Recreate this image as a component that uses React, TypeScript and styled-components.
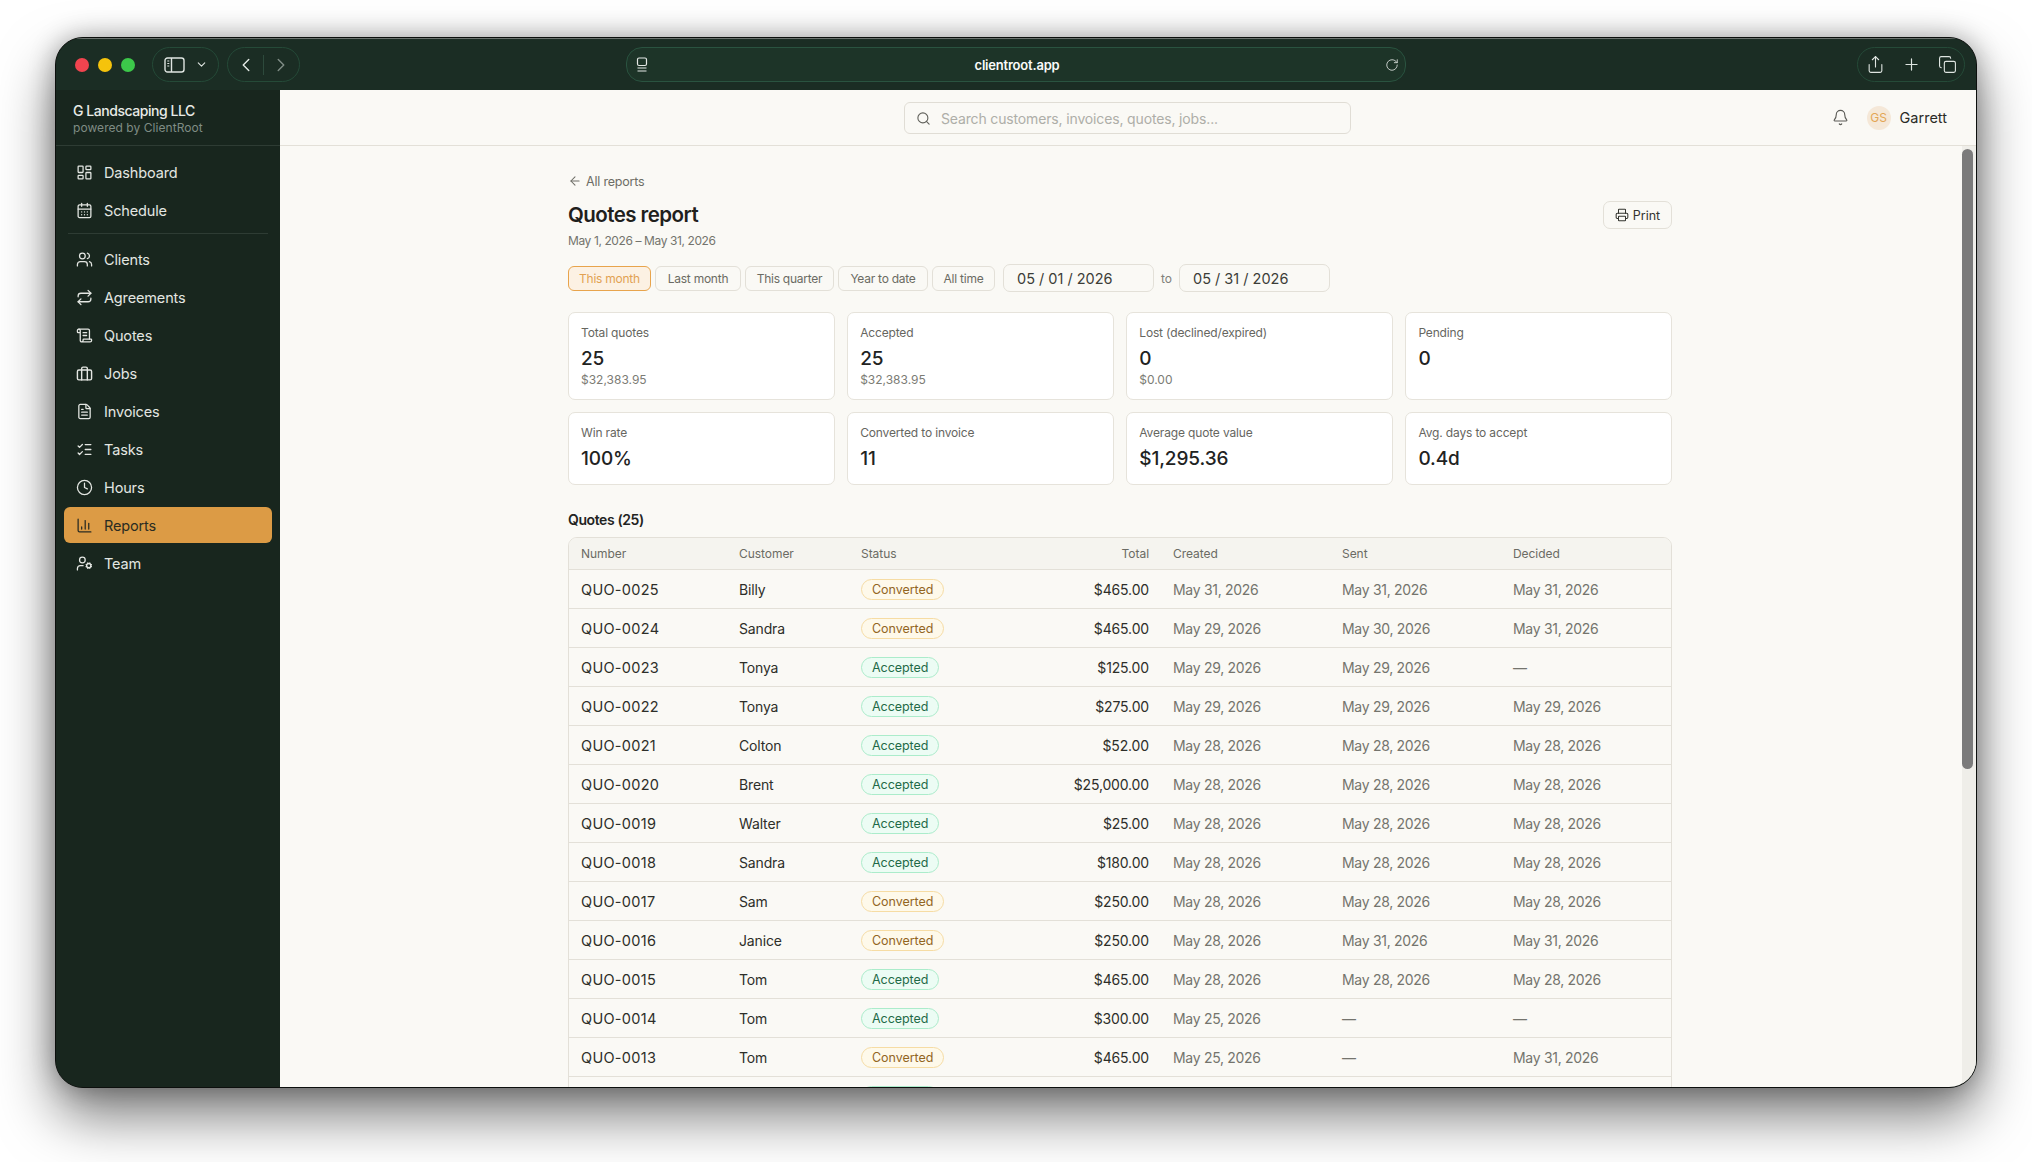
import styled, { createGlobalStyle } from "styled-components";
import {
  ArrowLeft,
  Bell,
  CalendarDays,
  ChartColumn,
  ChevronDown,
  ChevronLeft,
  ChevronRight,
  Clock,
  Copy,
  FileText,
  LayoutDashboard,
  ListChecks,
  Plus,
  Printer,
  Repeat,
  RotateCw,
  ScrollText,
  Search,
  Share,
  UserCog,
  Users,
} from "lucide-react";

const GlobalStyle = createGlobalStyle`
  html, body {
    margin: 0;
    padding: 0;
    background: #fff;
    overflow: hidden;
  }
  * { box-sizing: border-box; }
  body {
    font-family: Inter, "Open Sans", "Liberation Sans", sans-serif;
    color: #23241f;
  }
`;

const Stage = styled.div`
  width: 2032px;
  height: 1162px;
  padding: 37px 55px 74px;
`;

const Window = styled.div`
  width: 1922px;
  height: 1051px;
  display: flex;
  flex-direction: column;
  border: 1px solid #0c0f0d;
  border-radius: 28px;
  overflow: hidden;
  background: #18261e;
  box-shadow: 0 28px 56px rgba(0, 0, 0, 0.52), 0 0 26px rgba(0, 0, 0, 0.3);
`;

const Toolbar = styled.div`
  height: 52px;
  flex: none;
  display: flex;
  align-items: center;
  padding: 0 11px 0 19px;
  background: #1b2d24;
  border-top: 1px solid #6c736f;
`;

const Light = styled.span<{ $color: string }>`
  width: 14px;
  height: 14px;
  border-radius: 50%;
  background: ${(p) => p.$color};
  margin-right: 9px;
`;

const Pill = styled.div<{ $width: number; $gap?: number }>`
  width: ${(p) => p.$width}px;
  height: 35px;
  flex: none;
  display: flex;
  align-items: center;
  justify-content: center;
  gap: ${(p) => p.$gap ?? 17}px;
  border: 1px solid #254a38;
  border-radius: 18px;
  color: #dfe5e1;
  svg { flex: none; }
`;

const Lead = styled(Pill)`
  margin: 0 8px 0 8px;
`;

const Rule = styled.span`
  width: 1px;
  height: 20px;
  background: #2d4a3c;
`;

const Address = styled.div`
  width: 780px;
  height: 35px;
  flex: none;
  margin-left: 326px;
  display: flex;
  align-items: center;
  justify-content: space-between;
  padding: 0 6px 0 8px;
  background: #1d3428;
  border: 1px solid #2a5340;
  border-radius: 16px;
  color: #e4e8e5;
`;

const Url = styled.span`
  font-size: 13px;
  font-weight: 600;
  letter-spacing: -0.2px;
  color: #fafbfa;
`;

const TrailPill = styled(Pill)`
  margin-left: auto;
`;

const Body = styled.div`
  flex: 1;
  min-height: 0;
  display: flex;
`;

const Sidebar = styled.aside`
  width: 224px;
  flex: none;
  background: #18261e;
  color: #e3e6e2;
`;

const Brand = styled.div`
  height: 56px;
  padding: 12px 17px 0;
  border-bottom: 1px solid #2e3c34;
`;

const BrandName = styled.div`
  font-size: 14px;
  font-weight: 500;
  line-height: 18px;
  letter-spacing: -0.45px;
  color: #e8ebe7;
`;

const BrandSub = styled.div`
  font-size: 12px;
  line-height: 16px;
  letter-spacing: 0.05px;
  color: #7f8c84;
`;

const Nav = styled.nav`
  padding: 8px 8px 0 8px;
  display: flex;
  flex-direction: column;
  gap: 2px;
`;

const NavItem = styled.div<{ $active?: boolean }>`
  height: 36px;
  display: flex;
  align-items: center;
  gap: 11px;
  padding-left: 12px;
  border-radius: 6px;
  font-size: 14.5px;
  letter-spacing: -0.15px;
  background: ${(p) => (p.$active ? "#dc9b45" : "transparent")};
  color: ${(p) => (p.$active ? "#2a2c22" : "#e3e6e2")};
  svg { flex: none; }
`;

const NavRule = styled.div`
  height: 1px;
  margin: 3px 4px 5px;
  background: #2e3c34;
`;

const Main = styled.main`
  flex: 1;
  min-width: 0;
  display: flex;
  flex-direction: column;
  background: #faf9f5;
`;

const TopBar = styled.header`
  height: 56px;
  flex: none;
  position: relative;
  display: flex;
  align-items: center;
  justify-content: flex-end;
  gap: 13px;
  padding: 0 29px 0 0;
  border-bottom: 1px solid #e3e0d8;
`;

const SearchBox = styled.div`
  position: absolute;
  left: 624px;
  top: 12px;
  width: 447px;
  height: 32px;
  display: flex;
  align-items: center;
  gap: 10px;
  padding: 0 11px;
  border: 1px solid #e0ddd5;
  border-radius: 6px;
  color: #62625c;
`;

const Placeholder = styled.span`
  font-size: 14px;
  letter-spacing: -0.15px;
  color: #aeaea8;
`;

const BellIcon = styled(Bell)`
  color: #5b5b56;
  margin-right: 5px;
`;

const Avatar = styled.span`
  width: 24px;
  height: 24px;
  display: grid;
  place-items: center;
  border-radius: 50%;
  background: #f5e8d8;
  color: #e3a655;
  font-size: 12px;
`;

const UserName = styled.span`
  font-size: 14.5px;
  margin-left: -4px;
  color: #2a2b27;
`;

const ScrollArea = styled.div`
  flex: 1;
  min-height: 0;
  display: flex;
`;

const Viewport = styled.div`
  flex: 1;
  min-width: 0;
  overflow: hidden;
  padding: 27px 2px 0 0;
`;

const Track = styled.div`
  width: 14px;
  flex: none;
  padding: 3px 3px 0 0;
  background: #efeee9;
`;

const Thumb = styled.div`
  height: 620px;
  border-radius: 6px;
  background: #7b7b7b;
`;

const Content = styled.div`
  width: 1104px;
  margin: 0 auto;
`;

const BackLink = styled.a`
  display: flex;
  align-items: center;
  gap: 4px;
  height: 16px;
  font-size: 12.5px;
  letter-spacing: -0.2px;
  color: #6d6d66;
`;

const TitleRow = styled.div`
  margin-top: 12px;
  display: flex;
  align-items: center;
  justify-content: space-between;
`;

const Title = styled.h1`
  margin: 0;
  font-size: 20.5px;
  line-height: 28px;
  font-weight: 600;
  letter-spacing: -0.55px;
  color: #1f201c;
`;

const PrintButton = styled.button`
  width: 69px;
  height: 28px;
  display: flex;
  align-items: center;
  justify-content: center;
  gap: 4px;
  padding: 0;
  font: inherit;
  font-size: 12.5px;
  color: #33342f;
  background: #faf9f5;
  border: 1px solid #e3e0d8;
  border-radius: 7px;
`;

const Subtitle = styled.div`
  margin-top: 4px;
  font-size: 12px;
  line-height: 16px;
  letter-spacing: -0.4px;
  color: #74746d;
`;

const Filters = styled.div`
  margin-top: 15px;
  height: 28px;
  display: flex;
  align-items: center;
  gap: 4px;
`;

const Preset = styled.button<{ $active?: boolean; $width: number }>`
  width: ${(p) => p.$width}px;
  height: 25px;
  padding: 0;
  font: inherit;
  font-size: 12px;
  letter-spacing: -0.25px;
  border-radius: 6px;
  border: 1px solid ${(p) => (p.$active ? "#e8a44c" : "#e3e0d8")};
  background: ${(p) => (p.$active ? "#fcf1e3" : "#faf9f5")};
  color: ${(p) => (p.$active ? "#e2a152" : "#6b6b63")};
`;

const DateField = styled.div<{ $gap: number }>`
  width: 151px;
  height: 28px;
  margin-left: ${(p) => p.$gap}px;
  display: flex;
  align-items: center;
  padding-left: 13px;
  font-size: 14.5px;
  color: #3c3d38;
  border: 1px solid #e3e0d8;
  border-radius: 7px;
`;

const ToLabel = styled.span`
  margin-left: 3px;
  font-size: 12px;
  color: #80807a;
`;

const Stats = styled.div`
  margin-top: 20px;
  display: grid;
  grid-template-columns: repeat(4, 1fr);
  gap: 12px 12.5px;
`;

const StatCard = styled.div`
  padding: 12px 12px 11px;
  background: #fff;
  border: 1px solid #e6e3db;
  border-radius: 7px;
`;

const StatLabel = styled.div`
  font-size: 12px;
  line-height: 16px;
  letter-spacing: -0.15px;
  color: #66665f;
`;

const StatValue = styled.div`
  margin-top: 4px;
  font-size: 19px;
  line-height: 28px;
  font-weight: 500;
  letter-spacing: -0.1px;
  color: #22231f;
`;

const StatSub = styled.div`
  margin-top: -1px;
  font-size: 12px;
  line-height: 16px;
  color: #7c7c75;
`;

const SectionTitle = styled.h2`
  margin: 25px 0 7px;
  font-size: 14px;
  line-height: 20px;
  font-weight: 600;
  letter-spacing: -0.4px;
  color: #23241f;
`;

const Table = styled.div`
  border: 1px solid #e3e0d8;
  border-radius: 9px 9px 0 0;
  overflow: hidden;
`;

const columns = "158px 122px 150px 162px 169px 171px 1fr";

const HeadRow = styled.div`
  display: grid;
  grid-template-columns: ${columns};
  align-items: center;
  height: 32px;
  background: #f5f4ef;
  border-bottom: 1px solid #e3e0d8;
  font-size: 12px;
  letter-spacing: -0.05px;
  color: #6b6b64;
`;

const Row = styled.div`
  display: grid;
  grid-template-columns: ${columns};
  align-items: center;
  height: 39px;
  border-bottom: 1px solid #e3e0d8;
  font-size: 14px;
  letter-spacing: -0.15px;
  color: #2d2e29;
`;

const Cell = styled.div<{ $right?: boolean }>`
  padding: 0 12px;
  text-align: ${(p) => (p.$right ? "right" : "left")};
  white-space: nowrap;
`;

const NumberCell = styled(Cell)`
  font-size: 14.5px;
  letter-spacing: 0.3px;
`;

const DateCell = styled(Cell)`
  letter-spacing: -0.3px;
  color: #74746d;
`;

const Badge = styled.span<{ $status: string }>`
  display: inline-block;
  height: 21px;
  padding: 0 10px;
  line-height: 19px;
  font-size: 12.5px;
  letter-spacing: -0.05px;
  border-radius: 11px;
  border: 1px solid ${(p) => (p.$status === "Converted" ? "#f6dca4" : "#abeccb")};
  background: ${(p) => (p.$status === "Converted" ? "#fef9ea" : "#ecfcf4")};
  color: ${(p) => (p.$status === "Converted" ? "#92651f" : "#1f6a48")};
`;

const JobsIcon = () => (
  <svg width="17" height="17" viewBox="0 0 24 24" fill="none" stroke="currentColor" strokeWidth="2" strokeLinecap="round" strokeLinejoin="round">
    <rect x="2" y="7" width="20" height="14" rx="2" />
    <path d="M16 21V5a2 2 0 0 0-2-2h-4a2 2 0 0 0-2 2v16" />
  </svg>
);

const SidebarToggleIcon = () => (
  <svg width="21" height="16" viewBox="0 0 21 16" fill="none" stroke="currentColor" strokeWidth="1.4">
    <rect x="1" y="1" width="19" height="14" rx="2.5" />
    <path d="M7.5 1v14" />
    <path d="M3.3 4h2M3.3 6.5h2M3.3 9h2" strokeWidth="1.2" />
  </svg>
);

const SiteIcon = () => (
  <svg width="14" height="16" viewBox="0 0 14 16" fill="none" stroke="currentColor" strokeWidth="1.2">
    <rect x="2.5" y="1" width="9" height="7.5" rx="1.5" />
    <path d="M2.5 11h9M2.5 14h9" />
  </svg>
);

const navTop = [
  { label: "Dashboard", icon: LayoutDashboard },
  { label: "Schedule", icon: CalendarDays },
];

const navRest = [
  { label: "Clients", icon: Users },
  { label: "Agreements", icon: Repeat },
  { label: "Quotes", icon: ScrollText },
  { label: "Jobs", icon: JobsIcon },
  { label: "Invoices", icon: FileText },
  { label: "Tasks", icon: ListChecks },
  { label: "Hours", icon: Clock },
  { label: "Reports", icon: ChartColumn, active: true },
  { label: "Team", icon: UserCog },
];

const presets = [
  { label: "This month", width: 83, active: true },
  { label: "Last month", width: 86 },
  { label: "This quarter", width: 89 },
  { label: "Year to date", width: 90 },
  { label: "All time", width: 63 },
];

const stats = [
  { label: "Total quotes", value: "25", sub: "$32,383.95" },
  { label: "Accepted", value: "25", sub: "$32,383.95" },
  { label: "Lost (declined/expired)", value: "0", sub: "$0.00" },
  { label: "Pending", value: "0" },
  { label: "Win rate", value: "100%" },
  { label: "Converted to invoice", value: "11" },
  { label: "Average quote value", value: "$1,295.36" },
  { label: "Avg. days to accept", value: "0.4d" },
];

const quotes = [
  ["QUO-0025", "Billy", "Converted", "$465.00", "May 31, 2026", "May 31, 2026", "May 31, 2026"],
  ["QUO-0024", "Sandra", "Converted", "$465.00", "May 29, 2026", "May 30, 2026", "May 31, 2026"],
  ["QUO-0023", "Tonya", "Accepted", "$125.00", "May 29, 2026", "May 29, 2026", "—"],
  ["QUO-0022", "Tonya", "Accepted", "$275.00", "May 29, 2026", "May 29, 2026", "May 29, 2026"],
  ["QUO-0021", "Colton", "Accepted", "$52.00", "May 28, 2026", "May 28, 2026", "May 28, 2026"],
  ["QUO-0020", "Brent", "Accepted", "$25,000.00", "May 28, 2026", "May 28, 2026", "May 28, 2026"],
  ["QUO-0019", "Walter", "Accepted", "$25.00", "May 28, 2026", "May 28, 2026", "May 28, 2026"],
  ["QUO-0018", "Sandra", "Accepted", "$180.00", "May 28, 2026", "May 28, 2026", "May 28, 2026"],
  ["QUO-0017", "Sam", "Converted", "$250.00", "May 28, 2026", "May 28, 2026", "May 28, 2026"],
  ["QUO-0016", "Janice", "Converted", "$250.00", "May 28, 2026", "May 31, 2026", "May 31, 2026"],
  ["QUO-0015", "Tom", "Accepted", "$465.00", "May 28, 2026", "May 28, 2026", "May 28, 2026"],
  ["QUO-0014", "Tom", "Accepted", "$300.00", "May 25, 2026", "—", "—"],
  ["QUO-0013", "Tom", "Converted", "$465.00", "May 25, 2026", "—", "May 31, 2026"],
  ["", "", "Accepted", "", "", "", ""],
];

function App() {
  return (
    <Stage>
      <GlobalStyle />
      <Window>
        <Toolbar>
          <Light $color="#f1444f" />
          <Light $color="#f5c30c" />
          <Light $color="#3cc84a" />
          <Lead $width={67} $gap={10}>
            <SidebarToggleIcon />
            <ChevronDown size={13} strokeWidth={2} />
          </Lead>
          <Pill $width={73} $gap={6}>
            <ChevronLeft size={22} strokeWidth={1.6} />
            <Rule />
            <ChevronRight size={22} strokeWidth={1.6} color="#7d8a83" />
          </Pill>
          <Address>
            <SiteIcon />
            <Url>clientroot.app</Url>
            <RotateCw size={14} strokeWidth={1.4} />
          </Address>
          <TrailPill $width={108} $gap={17}>
            <Share size={19} strokeWidth={1.4} />
            <Plus size={19} strokeWidth={1.5} />
            <Copy size={19} strokeWidth={1.4} />
          </TrailPill>
        </Toolbar>
        <Body>
          <Sidebar>
            <Brand>
              <BrandName>G Landscaping LLC</BrandName>
              <BrandSub>powered by ClientRoot</BrandSub>
            </Brand>
            <Nav>
              {navTop.map((item) => (
                <NavItem key={item.label}>
                  <item.icon size={17} strokeWidth={1.8} />
                  {item.label}
                </NavItem>
              ))}
              <NavRule />
              {navRest.map((item) => (
                <NavItem key={item.label} $active={item.active}>
                  <item.icon size={17} strokeWidth={1.8} />
                  {item.label}
                </NavItem>
              ))}
            </Nav>
          </Sidebar>
          <Main>
            <TopBar>
              <SearchBox>
                <Search size={15} strokeWidth={1.8} />
                <Placeholder>Search customers, invoices, quotes, jobs...</Placeholder>
              </SearchBox>
              <BellIcon size={17} strokeWidth={1.6} />
              <Avatar>GS</Avatar>
              <UserName>Garrett</UserName>
            </TopBar>
            <ScrollArea>
              <Viewport>
                <Content>
                  <BackLink>
                    <ArrowLeft size={14} strokeWidth={1.8} />
                    All reports
                  </BackLink>
                  <TitleRow>
                    <Title>Quotes report</Title>
                    <PrintButton>
                      <Printer size={14} strokeWidth={1.8} />
                      Print
                    </PrintButton>
                  </TitleRow>
                  <Subtitle>May 1, 2026 – May 31, 2026</Subtitle>
                  <Filters>
                    {presets.map((p) => (
                      <Preset key={p.label} $active={p.active} $width={p.width}>
                        {p.label}
                      </Preset>
                    ))}
                    <DateField $gap={4}>05 / 01 / 2026</DateField>
                    <ToLabel>to</ToLabel>
                    <DateField $gap={3}>05 / 31 / 2026</DateField>
                  </Filters>
                  <Stats>
                    {stats.map((s) => (
                      <StatCard key={s.label}>
                        <StatLabel>{s.label}</StatLabel>
                        <StatValue>{s.value}</StatValue>
                        {s.sub ? <StatSub>{s.sub}</StatSub> : s.label === "Pending" ? <StatSub>&nbsp;</StatSub> : null}
                      </StatCard>
                    ))}
                  </Stats>
                  <SectionTitle>Quotes (25)</SectionTitle>
                  <Table>
                    <HeadRow>
                      <Cell>Number</Cell>
                      <Cell>Customer</Cell>
                      <Cell>Status</Cell>
                      <Cell $right>Total</Cell>
                      <Cell>Created</Cell>
                      <Cell>Sent</Cell>
                      <Cell>Decided</Cell>
                    </HeadRow>
                    {quotes.map((q, index) => (
                      <Row key={index}>
                        <NumberCell>{q[0]}</NumberCell>
                        <Cell>{q[1]}</Cell>
                        <Cell>
                          <Badge $status={q[2]}>{q[2]}</Badge>
                        </Cell>
                        <Cell $right>{q[3]}</Cell>
                        <DateCell>{q[4]}</DateCell>
                        <DateCell>{q[5]}</DateCell>
                        <DateCell>{q[6]}</DateCell>
                      </Row>
                    ))}
                  </Table>
                </Content>
              </Viewport>
              <Track>
                <Thumb />
              </Track>
            </ScrollArea>
          </Main>
        </Body>
      </Window>
    </Stage>
  );
}

export default App;
